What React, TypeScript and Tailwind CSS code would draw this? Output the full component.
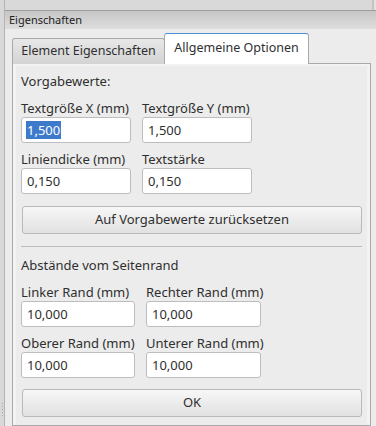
function Field({ label, value, selected }: { label: string; value: string; selected?: boolean }) {
  return (
    <div className="flex flex-col">
      <span className="h-[18px] leading-[18px] whitespace-nowrap">{label}</span>
      <div className="h-[26px] bg-white border border-[#bdbdbd] rounded-[3px] flex items-center pl-[4px]">
        {selected ? (
          <span className="bg-[#3d7acb] text-white leading-[18px] px-[1px]">{value}</span>
        ) : (
          <span className="leading-[18px] px-[1px]">{value}</span>
        )}
      </div>
    </div>
  )
}

function Button({ label }: { label: string }) {
  return (
    <div className="h-[28px] mx-[1px] rounded-[3px] border border-[#b9b9b9] bg-gradient-to-b from-[#f7f7f7] to-[#e1e1e1] flex items-center justify-center">
      {label}
    </div>
  )
}

export default function App() {
  return (
    <div className="w-[376px] h-[426px] overflow-hidden flex bg-[#d8d8d8] font-['Noto_Sans',sans-serif] text-[13px] text-[#2f2f2f]">
      {/* Splitter grip */}
      <div className="w-[5px] border-r border-[#b4b4b4] flex flex-col justify-end pb-[10px] items-center">
        <div className="flex flex-col gap-[2px]">
          {[0, 1, 2, 3, 4].map((i) => (
            <div key={i} className="w-[1px] h-[1px] bg-[#a8a8a8]" />
          ))}
        </div>
      </div>

      <div className="flex-1 flex flex-col min-w-0">
        {/* Top strip */}
        <div className="h-[10px] flex shrink-0">
          <div className="flex-1 bg-[#d9d9d9] border-r-2 border-[#c4c4c4]" />
          <div className="w-[2px] bg-[#e2e2e2]" />
        </div>
        <div className="h-[1px] bg-[#9d9d9d] shrink-0" />

        {/* Dock title */}
        <div className="h-[18px] shrink-0 bg-gradient-to-b from-[#c6c6c6] to-[#dedede] flex items-center pl-[4px] text-[11px] text-[#222]">
          Eigenschaften
        </div>

        {/* Body */}
        <div className="flex-1 bg-[#ececec] pl-[7px] pr-[5px] pt-[4px] flex flex-col min-h-0">
          {/* Tabs */}
          <div className="flex items-end h-[31px] shrink-0 -mb-[1px] relative z-10">
            <div className="h-[26px] w-[153px] border border-[#a9a9a9] border-b-0 rounded-t-[3px] bg-gradient-to-b from-[#e8e8e8] to-[#d3d3d3] flex items-center justify-center text-[12.5px]">
              Element Eigenschaften
            </div>
            <div className="h-[31px] w-[145px] border border-[#a9a9a9] border-t-[#4a90d9] border-b-0 rounded-t-[3px] bg-white flex items-center justify-center text-[12.5px] pb-[1px] -ml-[1px]">
              Allgemeine Optionen
            </div>
          </div>

          {/* Pane */}
          <div className="flex-1 border border-[#a9a9a9] bg-[#f3f3f3] pt-[2px] pl-[3px] pr-[3px] flex flex-col min-h-0">
            <div className="flex-1 bg-[#ececec] pl-[5px] pr-[4px] pt-[6px] flex flex-col">
              <span className="h-[18px] leading-[18px]">Vorgabewerte:</span>

              <div className="grid grid-cols-[110px_110px] gap-x-[11px] gap-y-[7px] mt-[9px]">
                <Field label="Textgröße X (mm)" value="1,500" selected />
                <Field label="Textgröße Y (mm)" value="1,500" />
                <Field label="Liniendicke (mm)" value="0,150" />
                <Field label="Textstärke" value="0,150" />
              </div>

              <div className="mt-[12px]">
                <Button label="Auf Vorgabewerte zurücksetzen" />
              </div>

              <div className="h-[1px] bg-[#bcbcbc] mt-[12px] mr-[1px]" />

              <span className="h-[18px] leading-[18px] mt-[9px]">Abstände vom Seitenrand</span>

              <div className="grid grid-cols-[114px_115px] gap-x-[11px] gap-y-[7px] mt-[9px]">
                <Field label="Linker Rand (mm)" value="10,000" />
                <Field label="Rechter Rand (mm)" value="10,000" />
                <Field label="Oberer Rand (mm)" value="10,000" />
                <Field label="Unterer Rand (mm)" value="10,000" />
              </div>

              <div className="mt-[11px]">
                <Button label="OK" />
              </div>
            </div>
          </div>
        </div>
      </div>
    </div>
  )
}
